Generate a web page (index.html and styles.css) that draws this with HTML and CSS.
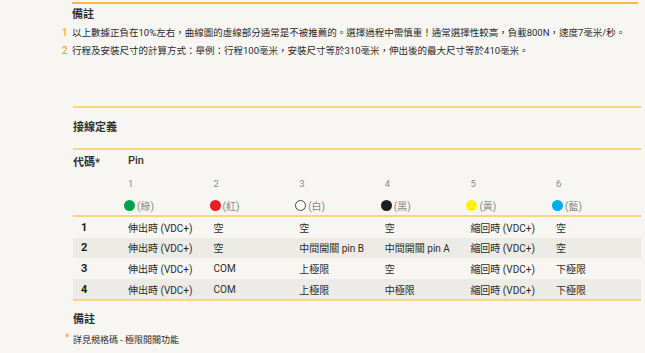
FILE: index.html
```html
<!DOCTYPE html>
<html lang="zh-Hant">
<head>
<meta charset="utf-8">
<link rel="stylesheet" href="styles.css">
</head>
<body>
<section class="notes-top">
  <h3 class="notes-title">備註</h3>
  <ol class="note-list">
    <li class="note-item"><span class="note-num">1</span><span>以上數據正負在10%左右，曲線圖的虛線部分通常是不被推薦的。選擇過程中需慎重！通常選擇性較高，負載800N，速度7毫米/秒。</span></li>
    <li class="note-item"><span class="note-num">2</span><span>行程及安裝尺寸的計算方式：舉例：行程100毫米，安裝尺寸等於310毫米，伸出後的最大尺寸等於410毫米。</span></li>
  </ol>
</section>

<section class="wiring">
  <h3 class="wiring-title">接線定義</h3>
  <div class="wtable">
    <div class="wrow head-row">
      <div class="cell code-h">代碼*</div>
      <div class="cell pin-h">Pin</div>
    </div>
    <div class="wrow num-row">
      <div class="cell"></div>
      <div class="cell">1</div><div class="cell">2</div><div class="cell">3</div>
      <div class="cell">4</div><div class="cell">5</div><div class="cell">6</div>
    </div>
    <div class="wrow color-row">
      <div class="cell"></div>
      <div class="cell"><span class="dot green"></span>(綠)</div>
      <div class="cell"><span class="dot red"></span>(紅)</div>
      <div class="cell"><span class="dot white"></span>(白)</div>
      <div class="cell"><span class="dot black"></span>(黑)</div>
      <div class="cell"><span class="dot yellow"></span>(黃)</div>
      <div class="cell"><span class="dot blue"></span>(藍)</div>
    </div>
    <div class="body">
      <div class="wrow data-row">
        <div class="cell code">1</div>
        <div class="cell">伸出時 (VDC+)</div><div class="cell">空</div><div class="cell">空</div>
        <div class="cell">空</div><div class="cell">縮回時 (VDC+)</div><div class="cell">空</div>
      </div>
      <div class="wrow data-row alt">
        <div class="cell code">2</div>
        <div class="cell">伸出時 (VDC+)</div><div class="cell">空</div><div class="cell">中間開關 pin B</div>
        <div class="cell">中間開關 pin A</div><div class="cell">縮回時 (VDC+)</div><div class="cell">空</div>
      </div>
      <div class="wrow data-row">
        <div class="cell code">3</div>
        <div class="cell">伸出時 (VDC+)</div><div class="cell">COM</div><div class="cell">上極限</div>
        <div class="cell">空</div><div class="cell">縮回時 (VDC+)</div><div class="cell">下極限</div>
      </div>
      <div class="wrow data-row alt">
        <div class="cell code">4</div>
        <div class="cell">伸出時 (VDC+)</div><div class="cell">COM</div><div class="cell">上極限</div>
        <div class="cell">中極限</div><div class="cell">縮回時 (VDC+)</div><div class="cell">下極限</div>
      </div>
    </div>
  </div>
  <h3 class="bottom-title">備註</h3>
  <p class="footnote"><span class="star">*</span>詳見規格碼 - 極限開關功能</p>
</section>
</body>
</html>
```

FILE: styles.css
```css
* { box-sizing: border-box; }
html, body { margin: 0; padding: 0; }
body {
  background: #f8f6f3;
  font-family: "Roboto", "Noto Sans CJK TC", sans-serif;
  color: #2b2b2b;
  width: 645px;
  height: 353px;
  overflow: hidden;
}
h3 { margin: 0; font-weight: 700; }

.notes-top {
  margin: 2px 7px 0 72px;
  border-top: 2px solid #f5b849;
}
.notes-title {
  font-size: 11px;
  line-height: 19px;
  padding-top: 1px;
  color: #333;
}
.note-list { list-style: none; margin: 0; padding: 0; }
.note-item {
  display: flex;
  font-size: 9.5px;
  line-height: 18px;
  color: #2b2b2b;
  white-space: nowrap;
}
.note-num {
  flex: none;
  width: 12px;
  margin-left: -12px;
  padding-left: 2px;
  color: #f2a91f;
  font-size: 10px;
  font-weight: 500;
}

.wiring {
  margin: 46px 4px 0 73px;
  border-top: 2px solid #f9d47e;
}
.wiring-title {
  font-size: 11px;
  line-height: 40px;
  color: #333;
}
.wtable { border-top: 2px solid #f9d47e; border-bottom: 2px solid #f9d47e; }
.wrow {
  display: grid;
  grid-template-columns: 47px repeat(5, 85.6px) 1fr;
  align-items: center;
}
.cell { padding-left: 8px; white-space: nowrap; }
.head-row { height: 21px; font-size: 11px; }
.code-h { font-weight: 700; padding-left: 0; color: #333; }
.pin-h { font-weight: 500; color: #333; }
.num-row { height: 24px; font-size: 9.5px; color: #8a8a8a; }
.color-row { height: 20px; font-size: 10px; color: #888; }
.color-row .cell { display: flex; align-items: center; padding-left: 4px; }
.dot {
  width: 11px; height: 11px; border-radius: 50%;
  display: inline-block; margin-right: 2px;
}
.green { background: #00a14b; }
.red { background: #ed1c24; }
.white { background: #fff; border: 1px solid #444; }
.black { background: #1e1e1e; }
.yellow { background: #fff200; }
.blue { background: #00aeef; }

.wtable .body { border-top: 2px solid #f9d47e; }
.data-row { height: 20.6px; font-size: 10px; color: #2b2b2b; }
.data-row.alt { background: #ecebe6; }
.code { font-weight: 700; font-size: 11px; color: #1a1a1a; }

.bottom-title {
  font-size: 11px;
  line-height: 14px;
  margin-top: 12px;
  color: #333;
}
.footnote {
  margin: 6px 0 0;
  font-size: 9px;
  line-height: 14px;
  color: #2b2b2b;
  position: relative;
}
.star {
  position: absolute;
  left: -8px;
  top: -2px;
  color: #f2a91f;
  font-size: 10px;
}
```
